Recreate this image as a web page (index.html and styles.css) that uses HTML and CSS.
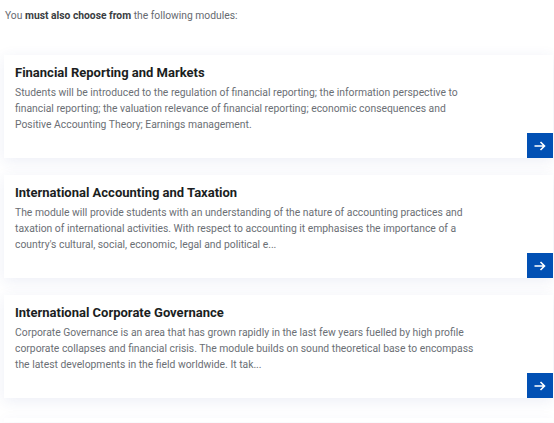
FILE: index.html
```html
<!DOCTYPE html>
<html>
<head>
<meta charset="utf-8">
<link rel="stylesheet" href="styles.css">
</head>
<body>
<div class="page">
  <p class="intro">You <strong>must also choose from</strong> the following modules:</p>
  <div class="list">
    <div class="card">
      <div class="content">
        <h3 class="title">Financial Reporting and Markets</h3>
        <p class="desc">Students will be introduced to the regulation of financial reporting; the information perspective to financial reporting; the valuation relevance of financial reporting; economic consequences and Positive Accounting Theory; Earnings management.</p>
      </div>
      <div class="foot"><a class="go" href="#" aria-label="More"><svg width="12" height="10" viewBox="0 0 12 10"><path d="M0.5 5H10.5M6.5 1L10.5 5L6.5 9" fill="none" stroke="#fff" stroke-width="1.6"/></svg></a></div>
    </div>
    <div class="card">
      <div class="content">
        <h3 class="title">International Accounting and Taxation</h3>
        <p class="desc">The module will provide students with an understanding of the nature of accounting practices and taxation of international activities. With respect to accounting it emphasises the importance of a country's cultural, social, economic, legal and political e...</p>
      </div>
      <div class="foot"><a class="go" href="#" aria-label="More"><svg width="12" height="10" viewBox="0 0 12 10"><path d="M0.5 5H10.5M6.5 1L10.5 5L6.5 9" fill="none" stroke="#fff" stroke-width="1.6"/></svg></a></div>
    </div>
    <div class="card">
      <div class="content">
        <h3 class="title">International Corporate Governance</h3>
        <p class="desc">Corporate Governance is an area that has grown rapidly in the last few years fuelled by high profile corporate collapses and financial crisis. The module builds on sound theoretical base to encompass the latest developments in the field worldwide. It tak...</p>
      </div>
      <div class="foot"><a class="go" href="#" aria-label="More"><svg width="12" height="10" viewBox="0 0 12 10"><path d="M0.5 5H10.5M6.5 1L10.5 5L6.5 9" fill="none" stroke="#fff" stroke-width="1.6"/></svg></a></div>
    </div>
    <div class="card card-empty"></div>
  </div>
</div>
</body>
</html>
```
FILE: styles.css
```css
html, body {
  margin: 0;
  padding: 0;
  background: #ffffff;
}
body {
  font-family: Roboto, "Noto Sans", sans-serif;
  overflow: hidden;
  height: 423px;
}
.page {
  padding: 9px 1px 0 4px;
}
.intro {
  margin: 0 0 0 1px;
  font-size: 10.3px;
  line-height: 14px;
  color: #666a70;
}
.intro strong {
  color: #3a3d42;
  font-weight: 700;
}
.list {
  margin-top: 32px;
  display: flex;
  flex-direction: column;
  gap: 17px;
}
.card {
  background: #fff;
  box-shadow: 0 3px 14px rgba(40, 70, 160, 0.09);
  display: flex;
  flex-direction: column;
}
.card-empty {
  margin-top: 3px;
  height: 4px;
}
.content {
  padding: 8px 11px 0 11px;
}
.title {
  margin: 0;
  font-size: 13px;
  line-height: 20px;
  font-weight: 700;
  color: #1b1e22;
}
.desc {
  margin: 2px 0 0 0;
  max-width: 462px;
  font-size: 10.35px;
  line-height: 16px;
  color: #6b6f75;
}
.foot {
  display: flex;
  justify-content: flex-end;
}
.go {
  width: 26px;
  height: 25px;
  background: #0150b4;
  display: flex;
  align-items: center;
  justify-content: center;
}
```
